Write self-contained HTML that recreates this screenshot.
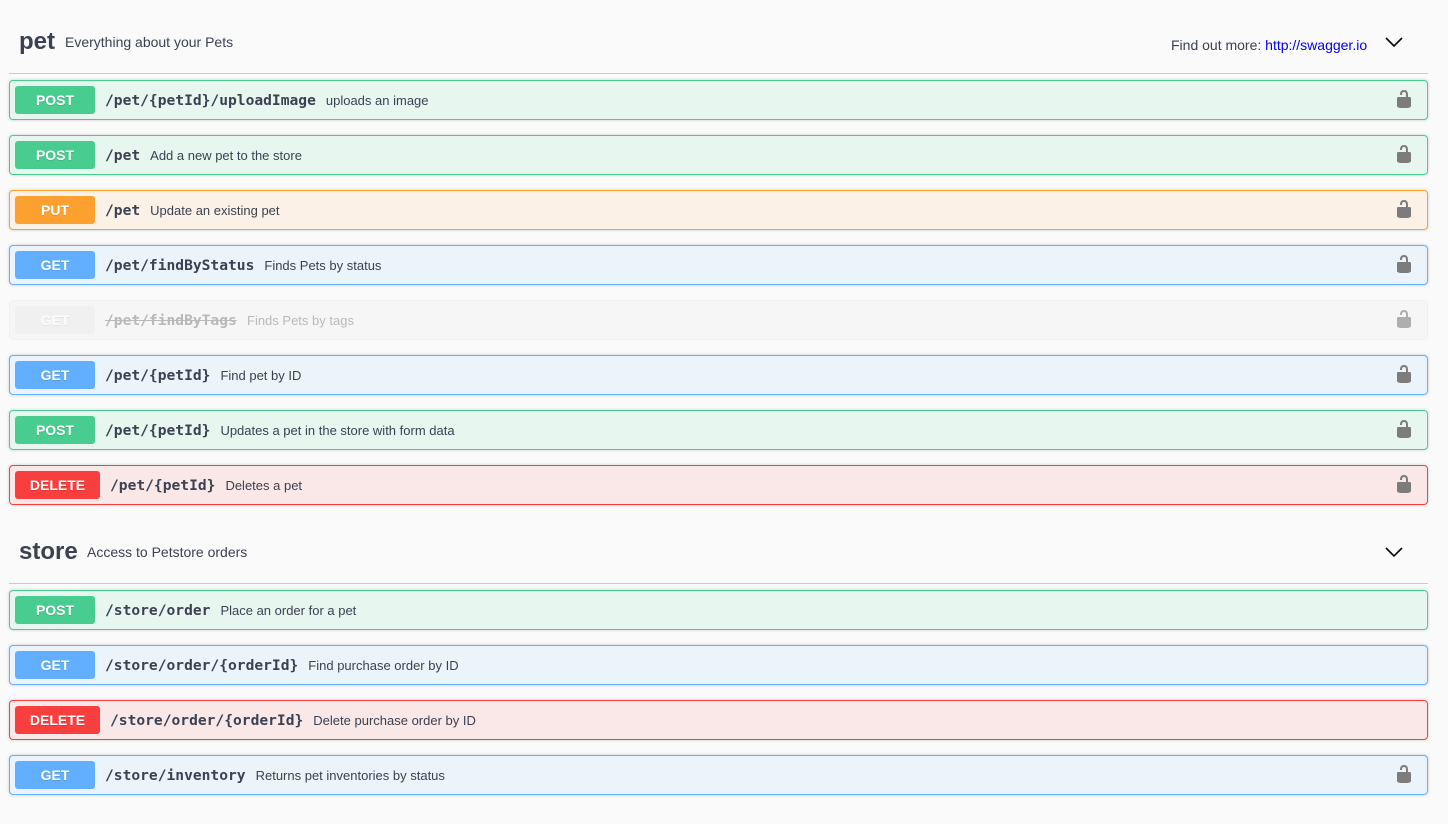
<!DOCTYPE html>
<html><head><meta charset="utf-8"><style>
body{margin:0;background:#fafafa;font-family:"Liberation Sans",sans-serif;color:#3b4151;width:1448px;height:824px;overflow:hidden;position:relative}
.tag{position:absolute;left:9px;width:1419px;height:40px;border-bottom:1px solid #c8cacd}
.tag .n{position:absolute;left:10px;font-size:24px;font-weight:bold}
.tag .d{position:absolute;left:56px;font-size:14px}
.chev{position:absolute;left:1376px;width:18px;height:12px}
.op{position:absolute;left:9px;width:1417px;height:38px;border:1px solid;border-radius:4px;box-shadow:0 0 3px rgba(0,0,0,.19)}
.b{position:absolute;left:5px;top:5px;width:80px;height:28px;border-radius:3px;color:#fff;font-weight:bold;font-size:14px;text-align:center;line-height:28px;text-shadow:0 1px 0 rgba(0,0,0,.1)}
.p{position:absolute;left:95px;top:11px;font-family:"DejaVu Sans Mono","Liberation Mono",monospace;font-weight:bold;font-size:14.6px;color:#3b4151}
.s{font-family:"Liberation Sans",sans-serif;font-weight:normal;font-size:13px;margin-left:10px}
.lock{position:absolute;left:1384px;top:8px}
.post{border-color:#49cc90;background:#e8f6f0}.post .b{background:#49cc90}
.put{border-color:#fca130;background:#fbf1e6}.put .b{background:#fca130}
.get{border-color:#61affe;background:#ebf3fb}.get .b{background:#61affe}
.del{border-color:#f93e3e;background:#fae7e7}.del .b{background:#f93e3e;width:85px}.del .p{left:100px}
.dep{border-color:#ebebeb;background:#f5f5f5;box-shadow:none;opacity:.6}.dep .b{background:#ebebeb}.dep .p{color:#8e8e8e;text-decoration:line-through}.dep .s{color:#8e8e8e;text-decoration:none;display:inline-block}
</style></head><body>
<svg width="0" height="0" style="position:absolute"><defs><symbol id="lk" viewBox="0 0 20 20"><path fill="#7c7c7c" d="M15.8 8H14V5.6C14 2.703 12.665 1 10 1 7.334 1 6 2.703 6 5.6V6h2v-.801C8 3.754 8.797 3 10 3c1.203 0 2 .754 2 2.199V8H4c-.553 0-1 .646-1 1.199V17c0 .549.428 1.139.951 1.307l1.197.387C5.672 18.861 6.448 19 7 19h6c.553 0 1.318-.139 1.852-.306l1.195-.387c.524-.167.953-.757.953-1.306V9.199C17 8.646 16.352 8 15.8 8z"/></symbol><symbol id="ch" viewBox="0 0 18 12"><path d="M1 2l8 8 8-8" fill="none" stroke="#000" stroke-width="1.6"/></symbol></defs></svg>

<div class="tag" style="top:33px"><span class="n" style="top:-5px">pet</span><span class="d" style="top:1px">Everything about your Pets</span>
<span style="position:absolute;left:1162px;top:4px;font-size:14px">Find out more: <span style="color:#0000ee">http://swagger.io</span></span>
<svg class="chev" style="top:3px"><use href="#ch"/></svg></div>

<div class="op post" style="top:80px"><div class="b">POST</div><div class="p">/pet/{petId}/uploadImage<span class="s">uploads an image</span></div><svg class="lock" width="20" height="20"><use href="#lk"/></svg></div>
<div class="op post" style="top:135px"><div class="b">POST</div><div class="p">/pet<span class="s">Add a new pet to the store</span></div><svg class="lock" width="20" height="20"><use href="#lk"/></svg></div>
<div class="op put" style="top:190px"><div class="b">PUT</div><div class="p">/pet<span class="s">Update an existing pet</span></div><svg class="lock" width="20" height="20"><use href="#lk"/></svg></div>
<div class="op get" style="top:245px"><div class="b">GET</div><div class="p">/pet/findByStatus<span class="s">Finds Pets by status</span></div><svg class="lock" width="20" height="20"><use href="#lk"/></svg></div>
<div class="op dep" style="top:300px"><div class="b">GET</div><div class="p">/pet/findByTags</div><div class="p" style="left:237px;text-decoration:none"><span class="s" style="margin:0">Finds Pets by tags</span></div><svg class="lock" width="20" height="20"><use href="#lk"/></svg></div>
<div class="op get" style="top:355px"><div class="b">GET</div><div class="p">/pet/{petId}<span class="s">Find pet by ID</span></div><svg class="lock" width="20" height="20"><use href="#lk"/></svg></div>
<div class="op post" style="top:410px"><div class="b">POST</div><div class="p">/pet/{petId}<span class="s">Updates a pet in the store with form data</span></div><svg class="lock" width="20" height="20"><use href="#lk"/></svg></div>
<div class="op del" style="top:465px"><div class="b">DELETE</div><div class="p">/pet/{petId}<span class="s">Deletes a pet</span></div><svg class="lock" width="20" height="20"><use href="#lk"/></svg></div>

<div class="tag" style="top:543px"><span class="n" style="top:-5px">store</span><span class="d" style="top:1px;left:78px">Access to Petstore orders</span>
<svg class="chev" style="top:3px"><use href="#ch"/></svg></div>

<div class="op post" style="top:590px"><div class="b">POST</div><div class="p">/store/order<span class="s">Place an order for a pet</span></div></div>
<div class="op get" style="top:645px"><div class="b">GET</div><div class="p">/store/order/{orderId}<span class="s">Find purchase order by ID</span></div></div>
<div class="op del" style="top:700px"><div class="b">DELETE</div><div class="p">/store/order/{orderId}<span class="s">Delete purchase order by ID</span></div></div>
<div class="op get" style="top:755px"><div class="b">GET</div><div class="p">/store/inventory<span class="s">Returns pet inventories by status</span></div><svg class="lock" width="20" height="20"><use href="#lk"/></svg></div>
</body></html>
